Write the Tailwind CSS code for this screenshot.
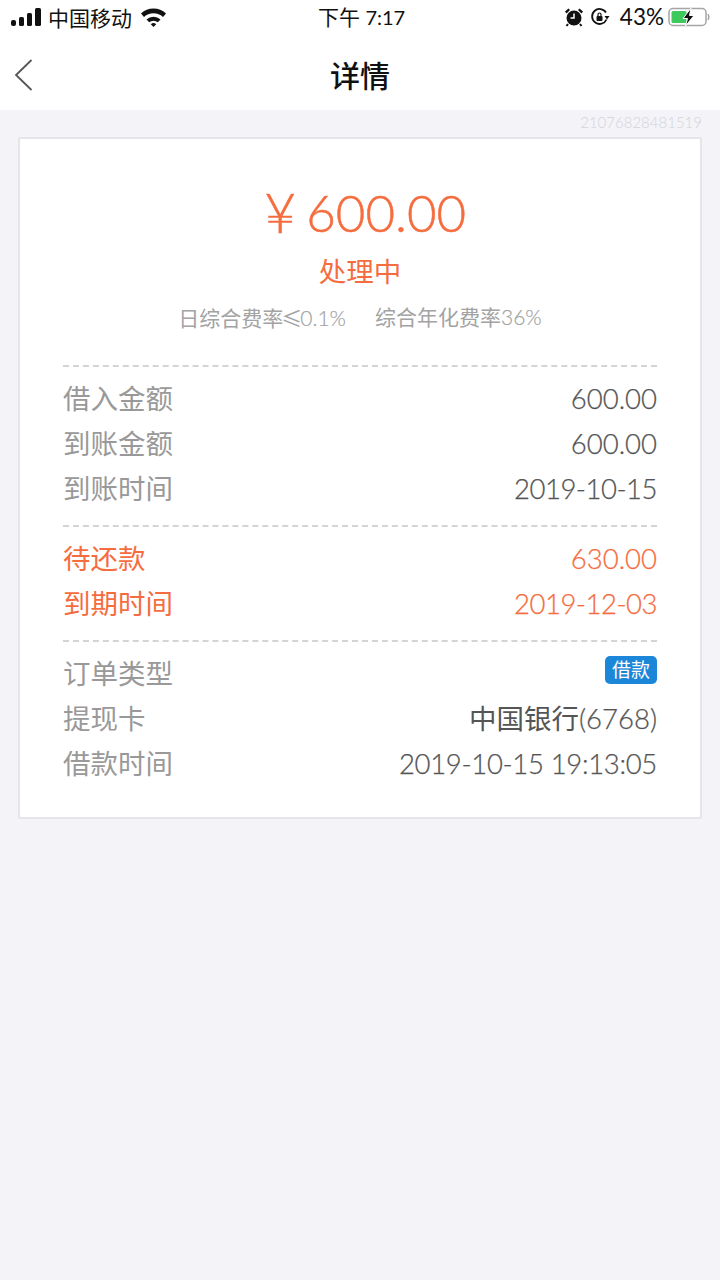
<!DOCTYPE html>
<html lang="zh"><head><meta charset="utf-8">
<script src="https://cdn.jsdelivr.net/npm/@tailwindcss/browser@4"></script>
</head>
<body class="w-[720px] h-[1280px] bg-[#f3f3f8] overflow-hidden font-['Lato','Noto_Sans_CJK_SC',sans-serif]">
<div class="bg-white h-[110px] flex flex-col">
  <div class="h-[36px] flex items-center justify-between relative text-[#111] pl-[10px] pr-[10px]">
    <div class="flex items-center gap-[6px] -translate-y-[1px]">
      <svg width="32" height="20" viewBox="0 0 32 20" fill="#111"><rect x="1" y="13" width="5" height="6" rx="2"/><rect x="9" y="10" width="5" height="9" rx="1.5"/><rect x="17" y="6" width="5" height="13" rx="1.5"/><rect x="25" y="1" width="6" height="18" rx="1.5"/></svg>
      <span class="text-[21px] leading-none">中国移动</span>
      <svg width="27" height="20" viewBox="0 0 27 20" class="ml-[2px]"><path d="M1 6.500 A18 18 0 0 1 26 6.500 L23 10 A14 14 0 0 0 4 10Z" fill="#111"/><path d="M6.500 12.500 A10 10 0 0 1 20.500 12.500 L17.800 15.300 A6.500 6.500 0 0 0 9.200 15.300Z" fill="#111"/><path d="M13.500 20 L10.800 17.200 A4 4 0 0 1 16.200 17.200Z" fill="#111"/></svg>
    </div>
    <span class="absolute left-[318px] top-[3px] text-[21px] leading-[28px]">下午 <span class="text-[20px]">7:17</span></span>
    <div class="flex items-center -translate-y-[1px]">
      <svg width="20" height="20" viewBox="0 0 20 20" class="mr-[6px]"><circle cx="10" cy="11" r="7.500" fill="#111"/><path d="M1 4.500 L4.500 1.500 L6 3 L2.500 6.500Z M19 4.500 L15.500 1.500 L14 3 L17.500 6.500Z" fill="#111"/><path d="M4 17 L2.500 19 M16 17 L17.500 19" stroke="#111" stroke-width="2"/><path d="M10 6.500 V11 H6.500" stroke="#fff" stroke-width="1.500" fill="none"/></svg>
      <svg width="20" height="20" viewBox="0 0 20 20" class="mr-[10px]"><path d="M16.500 12.500 A7.500 7.500 0 1 1 16 5.500" stroke="#111" stroke-width="1.800" fill="none"/><path d="M14.500 9 H19.500 L17 12.500Z" fill="#111"/><rect x="6.500" y="9" width="6" height="5" rx="1" fill="#111"/><path d="M8 9 V7.500 A1.500 1.500 0 0 1 11 7.500 V9" stroke="#111" stroke-width="1.200" fill="none"/></svg>
      <span class="text-[22.500px] leading-none">43%</span>
      <svg width="42" height="20" viewBox="0 0 42 20" class="ml-[4px]"><rect x="1" y="1.500" width="37" height="17" rx="4" fill="none" stroke="#a5a5a5" stroke-width="1.500"/><rect x="3.500" y="4" width="15" height="12" rx="1.500" fill="#3ec95b"/><path d="M40 7 Q41.500 10 40 13" stroke="#a5a5a5" stroke-width="1.500" fill="none"/><path d="M23 1 L15 11.500 H19.500 L17.500 19 L26 8.500 H21.500Z" fill="#111" stroke="#fff" stroke-width="1"/></svg>
    </div>
  </div>
  <div class="h-[74px] flex items-center justify-center relative">
    <svg width="20" height="34" viewBox="0 0 20 34" class="absolute left-[14px] top-[22px]"><path d="M17.500 2 L2 17 L17.500 32" fill="none" stroke="#555" stroke-width="1.800"/></svg>
    <span class="text-[30px] font-medium leading-none text-[#111] translate-y-[2px]">详情</span>
  </div>
</div>
<div class="h-[27px] pr-[18px] pb-[3px] flex items-center justify-end text-[15px] font-light leading-none text-[#d4d4d8]">21076828481519</div>
<div class="mx-[18px] h-[682px] bg-white border-2 border-[#e6e6ea] px-[43px]">
  <div class="h-[228px] border-b-2 border-dashed border-[#d4d4d4] flex flex-col items-center">
    <div class="mt-[43px] h-[60px] flex items-center text-[51px] font-light leading-none text-[#f56d3f] whitespace-pre [-webkit-text-stroke:0.5px_#f56d3f] translate-x-[5px]"><span class="text-[56px] mr-[-4px]">¥</span> 600.00</div>
    <div class="mt-[10px] text-[27.500px] leading-[40px] text-[#f56d3f]">处理中</div>
    <div class="mt-[10px] text-[21px] leading-[30px] text-[#a3a3a3] flex gap-[29px]"><span>日综合费率<span class="font-['Noto_Sans_CJK_SC'] -mx-[2px]">≤</span><span class="font-light [-webkit-text-stroke:0.2px_#a3a3a3]">0.1%</span></span><span>综合年化费率<span class="font-light [-webkit-text-stroke:0.2px_#a3a3a3]">36%</span></span></div>
  </div>
  <div class="h-[160px] border-b-2 border-dashed border-[#d4d4d4] pt-[9px] text-[27.500px] leading-[45px]">
    <div class="flex justify-between"><span class="text-[#999]">借入金额</span><span class="text-[#555] font-light [-webkit-text-stroke:0.25px_#555]">600.00</span></div>
    <div class="flex justify-between"><span class="text-[#999]">到账金额</span><span class="text-[#555] font-light [-webkit-text-stroke:0.25px_#555]">600.00</span></div>
    <div class="flex justify-between"><span class="text-[#999]">到账时间</span><span class="text-[#555] font-light [-webkit-text-stroke:0.25px_#555] tracking-[-0.5px]">2019-10-15</span></div>
  </div>
  <div class="h-[115px] border-b-2 border-dashed border-[#d4d4d4] pt-[9px] text-[27.500px] leading-[45px] text-[#f56d3f]">
    <div class="flex justify-between"><span>待还款</span><span class="font-light [-webkit-text-stroke:0.25px_#f56d3f]">630.00</span></div>
    <div class="flex justify-between"><span>到期时间</span><span class="font-light [-webkit-text-stroke:0.25px_#f56d3f] tracking-[-0.5px]">2019-12-03</span></div>
  </div>
  <div class="pt-[9px] text-[27.500px] leading-[45px]">
    <div class="flex justify-between"><span class="text-[#999]">订单类型</span><span class="h-[28px] w-[52px] mt-[5px] rounded-[5px] bg-[#1c86d8] text-white text-[19px] leading-[28px] text-center">借款</span></div>
    <div class="flex justify-between"><span class="text-[#999]">提现卡</span><span class="text-[#555]">中国银行<span class="font-light [-webkit-text-stroke:0.25px_#555]">(6768)</span></span></div>
    <div class="flex justify-between"><span class="text-[#999]">借款时间</span><span class="text-[#555] font-light [-webkit-text-stroke:0.25px_#555] tracking-[-0.33px]">2019-10-15 19:13:05</span></div>
  </div>
</div>
</body></html>
